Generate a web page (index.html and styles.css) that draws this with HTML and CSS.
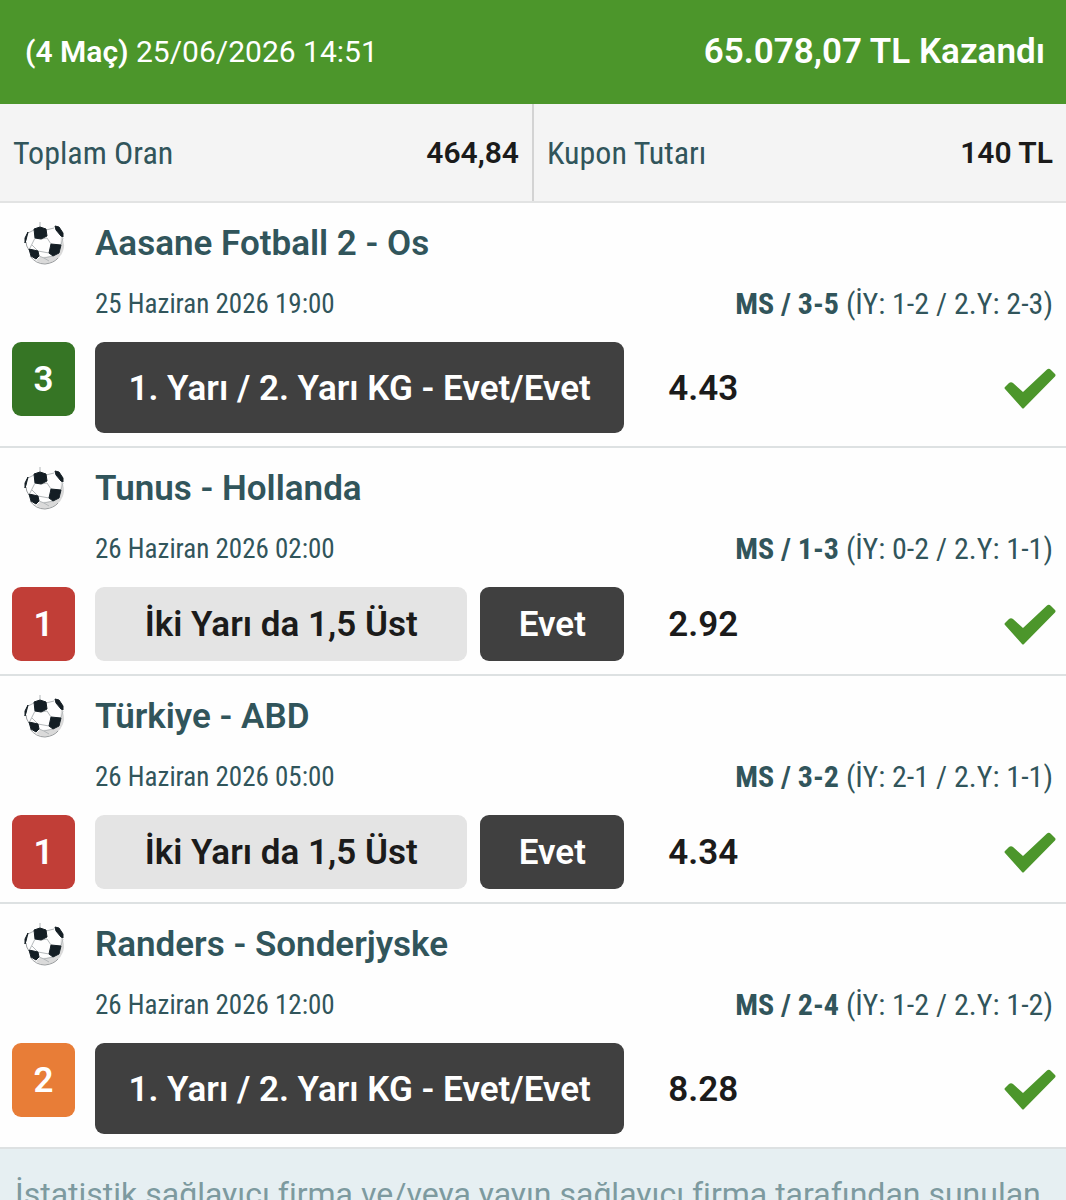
FILE: index.html
```html
<!DOCTYPE html>
<html lang="tr">
<head>
    <meta charset="UTF-8">
    <meta name="viewport" content="width=device-width, initial-scale=1.0">
    <title>Kupon</title>
    <link rel="stylesheet" href="styles.css">
</head>
<body>
    <svg class="symbols" aria-hidden="true">
        <symbol id="ball" viewBox="0 0 44 44">
            <path d="M38 14Q43 21 40 29Q36 40 23 41.500Q17 42 13 38L17 35Q25 35 30 34L37 30Z" fill="#dadada"/>
            <path d="M17 0V5M11 8L5 11M23 8L31 6M12 16L7 26M18 17L24 16L28 22M9 23L15 29L26 31M38 23L40 16M16 34L21 36L30 34M21 36L26 39" fill="none" stroke="#b4b8ba" stroke-width="1"/>
            <path d="M7 34Q13 42 22 42Q31 41 35 36M3 20Q3 24 6 28" fill="none" stroke="#9a9d9f" stroke-width="1"/>
            <path d="M11 7L17 5L23 7L24 14L18 17L12 16Z" fill="#141e24" stroke="#141e24" stroke-linejoin="round"/>
            <path d="M28 22L38 23L36 31L30 34L26 31Z" fill="#141e24" stroke="#141e24" stroke-linejoin="round"/>
            <path d="M6 27L15 29L16 34L13 37L8 34Z" fill="#141e24" stroke="#141e24" stroke-linejoin="round"/>
            <path d="M32 4L36 5L40 11L40 15L38 14L33 8Z" fill="#141e24" stroke="#141e24" stroke-linejoin="round"/>
            <path d="M5 10L2 16L2 21L3 18Z" fill="#141e24" stroke="#141e24" stroke-linejoin="round"/>
        </symbol>
        <symbol id="check" viewBox="0 0 52 42">
            <path d="M1 19L5 15Q7 13.500 9 15L19 24L43 1.500Q45 0 47 2L51 6Q52 7 51 8.500L20 40Q19 41 18 40L1 21Q0 20 1 19Z" fill="#4c962b"/>
        </symbol>
    </svg>

    <header class="coupon-header">
        <div class="coupon-date"><strong>(4 Maç)</strong> 25/06/2026 14:51</div>
        <div class="coupon-win">65.078,07 TL Kazandı</div>
    </header>

    <div class="summary">
        <div class="summary-item">
            <span class="label">Toplam Oran</span>
            <strong>464,84</strong>
        </div>
        <div class="summary-item">
            <span class="label">Kupon Tutarı</span>
            <strong>140 TL</strong>
        </div>
    </div>

    <main>
        <section class="match">
            <div class="match-title">
                <svg class="ball"><use href="#ball"/></svg>
                <h2>Aasane Fotball 2 - Os</h2>
            </div>
            <div class="match-info">
                <span class="time">25 Haziran 2026 19:00</span>
                <span class="score"><strong>MS / 3-5</strong> (İY: 1-2 / 2.Y: 2-3)</span>
            </div>
            <div class="match-bet">
                <span class="mbs green">3</span>
                <div class="picks">
                    <span class="pick large">1. Yarı / 2. Yarı KG - Evet/Evet</span>
                </div>
                <div class="result">
                    <span class="odds">4.43</span>
                    <svg class="check"><use href="#check"/></svg>
                </div>
            </div>
        </section>

        <section class="match">
            <div class="match-title">
                <svg class="ball"><use href="#ball"/></svg>
                <h2>Tunus - Hollanda</h2>
            </div>
            <div class="match-info">
                <span class="time">26 Haziran 2026 02:00</span>
                <span class="score"><strong>MS / 1-3</strong> (İY: 0-2 / 2.Y: 1-1)</span>
            </div>
            <div class="match-bet">
                <span class="mbs red">1</span>
                <div class="picks">
                    <span class="market">İki Yarı da 1,5 Üst</span>
                    <span class="pick">Evet</span>
                </div>
                <div class="result">
                    <span class="odds">2.92</span>
                    <svg class="check"><use href="#check"/></svg>
                </div>
            </div>
        </section>

        <section class="match">
            <div class="match-title">
                <svg class="ball"><use href="#ball"/></svg>
                <h2>Türkiye - ABD</h2>
            </div>
            <div class="match-info">
                <span class="time">26 Haziran 2026 05:00</span>
                <span class="score"><strong>MS / 3-2</strong> (İY: 2-1 / 2.Y: 1-1)</span>
            </div>
            <div class="match-bet">
                <span class="mbs red">1</span>
                <div class="picks">
                    <span class="market">İki Yarı da 1,5 Üst</span>
                    <span class="pick">Evet</span>
                </div>
                <div class="result">
                    <span class="odds">4.34</span>
                    <svg class="check"><use href="#check"/></svg>
                </div>
            </div>
        </section>

        <section class="match">
            <div class="match-title">
                <svg class="ball"><use href="#ball"/></svg>
                <h2>Randers - Sonderjyske</h2>
            </div>
            <div class="match-info">
                <span class="time">26 Haziran 2026 12:00</span>
                <span class="score"><strong>MS / 2-4</strong> (İY: 1-2 / 2.Y: 1-2)</span>
            </div>
            <div class="match-bet">
                <span class="mbs orange">2</span>
                <div class="picks">
                    <span class="pick large">1. Yarı / 2. Yarı KG - Evet/Evet</span>
                </div>
                <div class="result">
                    <span class="odds">8.28</span>
                    <svg class="check"><use href="#check"/></svg>
                </div>
            </div>
        </section>
    </main>

    <footer class="notice">İstatistik sağlayıcı firma ve/veya yayın sağlayıcı firma tarafından sunulan</footer>
</body>
</html>
```
FILE: styles.css
```css
* { box-sizing: border-box; }
body { display: flex; flex-direction: column; height: 100vh; margin: 0; overflow: hidden; background: #fefefe; color: #1b1b1b; font-family: Roboto, sans-serif; font-size: 35px; line-height: 42px; }
strong, h2 { font-weight: 600; }
.symbols { display: none; }

.coupon-header { display: flex; flex-shrink: 0; justify-content: space-between; align-items: center; height: 104px; padding: 0 21px 0 25px; background: #4c962b; color: #fff; }
.coupon-date { font-size: 30px; }
.coupon-win { font-weight: 600; }

.summary { display: flex; flex-shrink: 0; height: 99px; background: #f4f4f4; border-bottom: 2px solid #e2e3e3; font-size: 30px; }
.summary-item { display: flex; flex: 1; justify-content: space-between; align-items: center; padding: 0 13px; }
.summary-item + .summary-item { border-left: 2px solid #d3d3d3; }
.label { font-family: "Roboto Condensed", Roboto, sans-serif; font-size: 32px; color: #31555b; }

main { flex-shrink: 0; }
.match { padding: 20px 10px 13px 12px; border-bottom: 2px solid #dde1e2; }
.match-title { display: flex; align-items: center; height: 42px; gap: 28px; padding-left: 11px; }
.match-title h2 { margin: 0; font-size: 35px; color: #31555b; }
.ball { width: 44px; height: 44px; }
.match-info { display: flex; justify-content: space-between; align-items: center; height: 77px; padding: 0 3px 0 83px; font-family: "Roboto Condensed", Roboto, sans-serif; font-size: 27px; color: #31555b; }
.score { font-size: 30px; }
.score strong { font-weight: 700; }

.match-bet { display: grid; grid-template-columns: 63px 9fr 7fr; column-gap: 20px; align-items: start; font-weight: 600; }
.mbs, .market, .pick { display: flex; justify-content: center; align-items: center; height: 74px; padding-top: 2px; border-radius: 9px; }
.mbs { color: #fff; }
.green { background: #367525; }
.red { background: #c13e37; }
.orange { background: #e87d37; }
.picks { display: flex; gap: 13px; }
.market { flex: 1; background: #e4e4e4; }
.pick { width: 144px; background: #404040; color: #fff; }
.pick.large { width: 100%; height: 91px; }
.result { display: flex; justify-content: space-between; align-items: center; align-self: stretch; padding: 2px 0 0 24px; }
.check { width: 52px; height: 42px; }

.notice { flex: 1; padding: 24px 15px 0; background: #e6eff2; color: #7d9a9f; font-size: 32px; white-space: nowrap; overflow: hidden; }
```
